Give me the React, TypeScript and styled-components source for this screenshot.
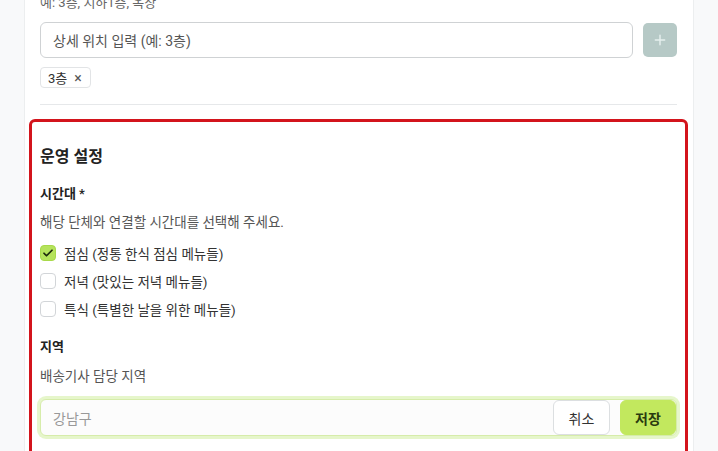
import React from 'react';
import styled, { createGlobalStyle } from 'styled-components';

const GlobalStyle = createGlobalStyle`
  html, body {
    margin: 0;
    padding: 0;
    background: #f8f9fa;
    font-family: Roboto, "Noto Sans CJK KR", sans-serif;
    color: #222;
    overflow: hidden;
  }
  * { box-sizing: border-box; }
`;

const Card = styled.div`
  width: 670px;
  margin-left: 24px;
  margin-top: -6px;
  background: #fff;
  border-left: 1px solid #eceeef;
  border-right: 1px solid #eceeef;
  padding: 0 16px 40px 15px;
  min-height: 470px;
`;

const Hint = styled.div`
  font-size: 13px;
  line-height: 18px;
  color: #666;
`;

const AddRow = styled.div`
  display: flex;
  align-items: center;
  gap: 10px;
  margin-top: 10px;
`;

const TextInput = styled.div`
  flex: 1;
  height: 36px;
  border: 1px solid #cfd2d4;
  border-radius: 6px;
  display: flex;
  align-items: center;
  padding: 0 12px;
  font-size: 14px;
  color: #555;
`;

const PlusButton = styled.button`
  width: 34px;
  height: 34px;
  border: none;
  border-radius: 5px;
  background: #b6c9c6;
  color: #e6efee;
  display: flex;
  align-items: center;
  justify-content: center;
  padding: 0;
`;

const Tags = styled.div`
  display: flex;
  margin-top: 9px;
`;

const Tag = styled.span`
  display: inline-flex;
  align-items: center;
  gap: 7px;
  height: 21px;
  padding: 0 8px 0 7px;
  border: 1px solid #e2e4e6;
  border-radius: 4px;
  font-size: 13px;
  color: #333;
  background: #fff;
`;

const TagClose = styled.span`
  font-size: 14px;
  color: #555;
`;

const Divider = styled.hr`
  border: none;
  border-top: 1px solid #e6e8ea;
  margin: 16px 0 0;
`;

const Section = styled.section`
  margin: 14px -11px 0;
  border: 3px solid #d3141c;
  border-radius: 6px;
  padding: 23px 8px 20px;
`;

const SectionTitle = styled.h3`
  margin: 0;
  font-size: 16px;
  line-height: 24px;
  font-weight: 600;
  color: #222;
`;

const FieldLabel = styled.div<{ gap?: number }>`
  margin-top: ${({ gap }) => gap ?? 15}px;
  font-size: 13px;
  line-height: 20px;
  font-weight: 600;
  color: #222;
`;

const FieldDesc = styled.div<{ gap?: number }>`
  margin-top: ${({ gap }) => gap ?? 8}px;
  font-size: 13.5px;
  line-height: 20px;
  color: #555;
`;

const CheckList = styled.div`
  margin-top: 7px;
  display: flex;
  flex-direction: column;
`;

const CheckRow = styled.label`
  height: 28px;
  display: flex;
  align-items: center;
  gap: 8px;
  font-size: 13.5px;
  color: #333;
`;

const Box = styled.span<{ checked?: boolean }>`
  width: 16px;
  height: 16px;
  border-radius: 4px;
  border: 1px solid ${({ checked }) => (checked ? '#a8d94a' : '#d2d5d8')};
  background: ${({ checked }) => (checked ? '#b5e35c' : '#fff')};
  display: flex;
  align-items: center;
  justify-content: center;
`;

const InputGroup = styled.div`
  margin-top: 13px;
  height: 37px;
  display: flex;
  align-items: center;
  gap: 10px;
  border: 1px solid #d6ecaa;
  border-radius: 6px;
  box-shadow: 0 0 0 3px rgba(200, 235, 140, 0.45);
  background: #fcfcfc;
  padding-right: 0;
`;

const GroupInput = styled.div`
  flex: 1;
  padding-left: 12px;
  font-size: 14px;
  color: #999;
`;

const ActionButton = styled.button<{ primary?: boolean }>`
  height: 35px;
  width: ${({ primary }) => (primary ? 56 : 57)}px;
  border-radius: 6px;
  border: 1px solid ${({ primary }) => (primary ? '#c2e85e' : '#dcdfe1')};
  background: ${({ primary }) => (primary ? '#c2e85e' : '#fff')};
  color: ${({ primary }) => (primary ? '#2a3a10' : '#333')};
  font-family: inherit;
  font-size: 14px;
  font-weight: ${({ primary }) => (primary ? 600 : 400)};
`;

const Check = () => (
  <svg width="12" height="12" viewBox="0 0 24 24" fill="none" stroke="#1d2a0c" strokeWidth="3.5" strokeLinecap="round" strokeLinejoin="round">
    <path d="M4 12.5l5 5L20 6.5" />
  </svg>
);

const Plus = () => (
  <svg width="14" height="14" viewBox="0 0 24 24" fill="none" stroke="currentColor" strokeWidth="2.5" strokeLinecap="round">
    <path d="M12 4v16M4 12h16" />
  </svg>
);

const times = [
  { label: '점심 (정통 한식 점심 메뉴들)', checked: true },
  { label: '저녁 (맛있는 저녁 메뉴들)', checked: false },
  { label: '특식 (특별한 날을 위한 메뉴들)', checked: false },
];

export default function App() {
  return (
    <>
      <GlobalStyle />
      <Card>
        <Hint>예: 3층, 지하1층, 옥상</Hint>
        <AddRow>
          <TextInput>상세 위치 입력 (예: 3층)</TextInput>
          <PlusButton><Plus /></PlusButton>
        </AddRow>
        <Tags>
          <Tag>3층 <TagClose>×</TagClose></Tag>
        </Tags>
        <Divider />
        <Section>
          <SectionTitle>운영 설정</SectionTitle>
          <FieldLabel>시간대 *</FieldLabel>
          <FieldDesc>해당 단체와 연결할 시간대를 선택해 주세요.</FieldDesc>
          <CheckList>
            {times.map((t) => (
              <CheckRow key={t.label}>
                <Box checked={t.checked}>{t.checked && <Check />}</Box>
                {t.label}
              </CheckRow>
            ))}
          </CheckList>
          <FieldLabel gap={14}>지역</FieldLabel>
          <FieldDesc gap={9}>배송기사 담당 지역</FieldDesc>
          <InputGroup>
            <GroupInput>강남구</GroupInput>
            <ActionButton>취소</ActionButton>
            <ActionButton primary>저장</ActionButton>
          </InputGroup>
        </Section>
      </Card>
    </>
  );
}
